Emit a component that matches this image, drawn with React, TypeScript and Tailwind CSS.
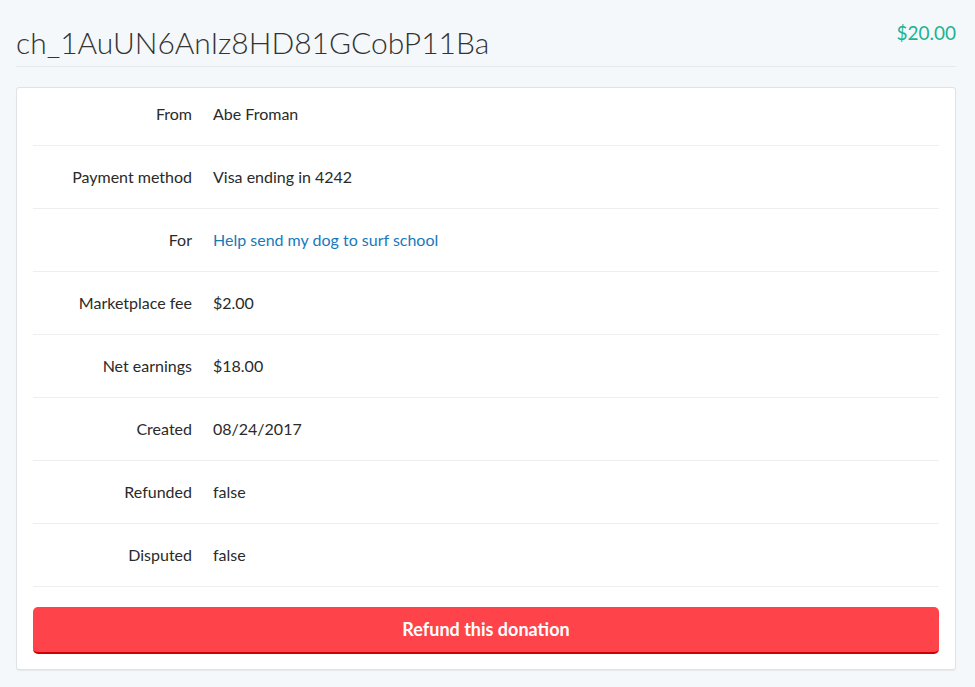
const rows: { label: string; value: string; link?: boolean }[] = [
  { label: "From", value: "Abe Froman" },
  { label: "Payment method", value: "Visa ending in 4242" },
  { label: "For", value: "Help send my dog to surf school", link: true },
  { label: "Marketplace fee", value: "$2.00" },
  { label: "Net earnings", value: "$18.00" },
  { label: "Created", value: "08/24/2017" },
  { label: "Refunded", value: "false" },
  { label: "Disputed", value: "false" },
];

export default function App() {
  return (
    <div className="min-h-[687px] bg-[#f5f8fa] pl-4 pr-[19px] pb-4 font-['Lato',sans-serif] text-[#2a2a2a]">
      <div className="flex items-start justify-between border-b border-[#e6e9ec] pb-[6px]">
        <h1 className="mt-6 text-[30px] font-light leading-9 text-[#333]">
          ch_1AuUN6AnIz8HD81GCobP11Ba
        </h1>
        <span className="mt-[21px] text-[19px] leading-6 text-[#1bb394]">$20.00</span>
      </div>
      <div className="mt-5 rounded-[3px] border border-[#dfe3e6] bg-white px-4 pb-[15px] shadow-[0_1px_1px_rgba(0,0,0,0.06)]">
        {rows.map((r, i) => (
          <div
            key={r.label}
            className={`flex items-center border-b border-[#eceeef] text-[16px] leading-5 ${
              i === 0 ? "pt-4 pb-[21px]" : "py-[21px]"
            }`}
          >
            <div className="w-[159px] shrink-0 text-right">{r.label}</div>
            <div className={`ml-[21px] ${r.link ? "text-[#1779ba]" : "text-[#2a2a2a]"}`}>{r.value}</div>
          </div>
        ))}
        <button className="mt-5 h-[47px] w-full rounded-[5px] border-b-2 border-[#d10000] bg-[#ff434a] text-[18px] font-bold text-white">
          Refund this donation
        </button>
      </div>
    </div>
  );
}
